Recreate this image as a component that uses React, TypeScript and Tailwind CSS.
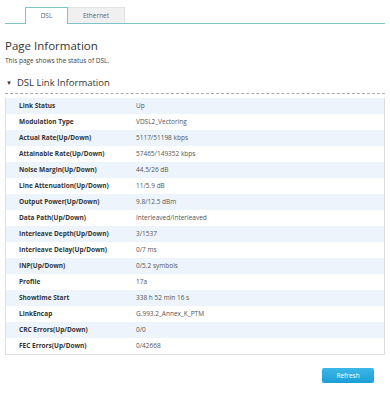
import React from 'react';

const rows: [string, string][] = [
  ['Link Status', 'Up'],
  ['Modulation Type', 'VDSL2_Vectoring'],
  ['Actual Rate(Up/Down)', '5117/51198 kbps'],
  ['Attainable Rate(Up/Down)', '57465/149352 kbps'],
  ['Noise Margin(Up/Down)', '44.5/26 dB'],
  ['Line Attenuation(Up/Down)', '11/5.9 dB'],
  ['Output Power(Up/Down)', '9.8/12.5 dBm'],
  ['Data Path(Up/Down)', 'Interleaved/Interleaved'],
  ['Interleave Depth(Up/Down)', '3/1537'],
  ['Interleave Delay(Up/Down)', '0/7 ms'],
  ['INP(Up/Down)', '0/5.2 symbols'],
  ['Profile', '17a'],
  ['Showtime Start', '338 h 52 min 16 s'],
  ['LinkEncap', 'G.993.2_Annex_K_PTM'],
  ['CRC Errors(Up/Down)', '0/0'],
  ['FEC Errors(Up/Down)', '0/42668'],
];

export default function App() {
  return (
    <div className="w-[390px] h-[400px] bg-white text-[#333] font-['Open_Sans',sans-serif] overflow-hidden">
      {/* tabs */}
      <div className="flex pl-[20px] pt-[7px] mx-[5px] border-b border-[#7fc4c4]">
        <div className="w-[43px] h-[17px] -mb-px bg-white border border-b-0 border-[#7fc4c4] text-[6.5px] text-[#666] flex items-center justify-center">
          DSL
        </div>
        <div className="w-[57px] h-[16px] bg-[#f0f0f0] border border-l-0 border-b-0 border-[#e2e2e2] text-[6.5px] text-[#666] flex items-center justify-center">
          Ethernet
        </div>
      </div>

      <div className="px-[5px]">
        <div className="mt-[15px] text-[11.5px] leading-[14px] text-[#333]">Page Information</div>
        <div className="mt-[3px] text-[6.5px] leading-[9px] text-[#444]">This page shows the status of DSL.</div>

        <div className="mt-[12px] flex items-center gap-[5px] text-[9.5px] leading-[12px] text-[#333]">
          <span className="text-[6px] ml-[1px]">▼</span>
          <span>DSL Link Information</span>
        </div>
        <div className="mt-[4px] border-t border-dashed border-[#aaa]" />

        <div className="mt-[4px] border border-t-0 border-[#ddd]">
          {rows.map(([k, v], i) => (
            <div
              key={k}
              className={`flex h-[16px] items-center text-[6.5px] ${i % 2 === 0 ? 'bg-[#eef4fb]' : 'bg-white'}`}
            >
              <div className="w-[130px] pl-[13px] font-bold text-[#333]">{k}</div>
              <div className="text-[#555]">{v}</div>
            </div>
          ))}
        </div>

        <div className="flex justify-end mt-[13px] pr-[11px]">
          <button className="w-[52px] h-[15px] rounded-[2px] bg-gradient-to-b from-[#3bb7e8] to-[#1a9fd6] text-white text-[6.5px] flex items-center justify-center">
            Refresh
          </button>
        </div>
      </div>
    </div>
  );
}
